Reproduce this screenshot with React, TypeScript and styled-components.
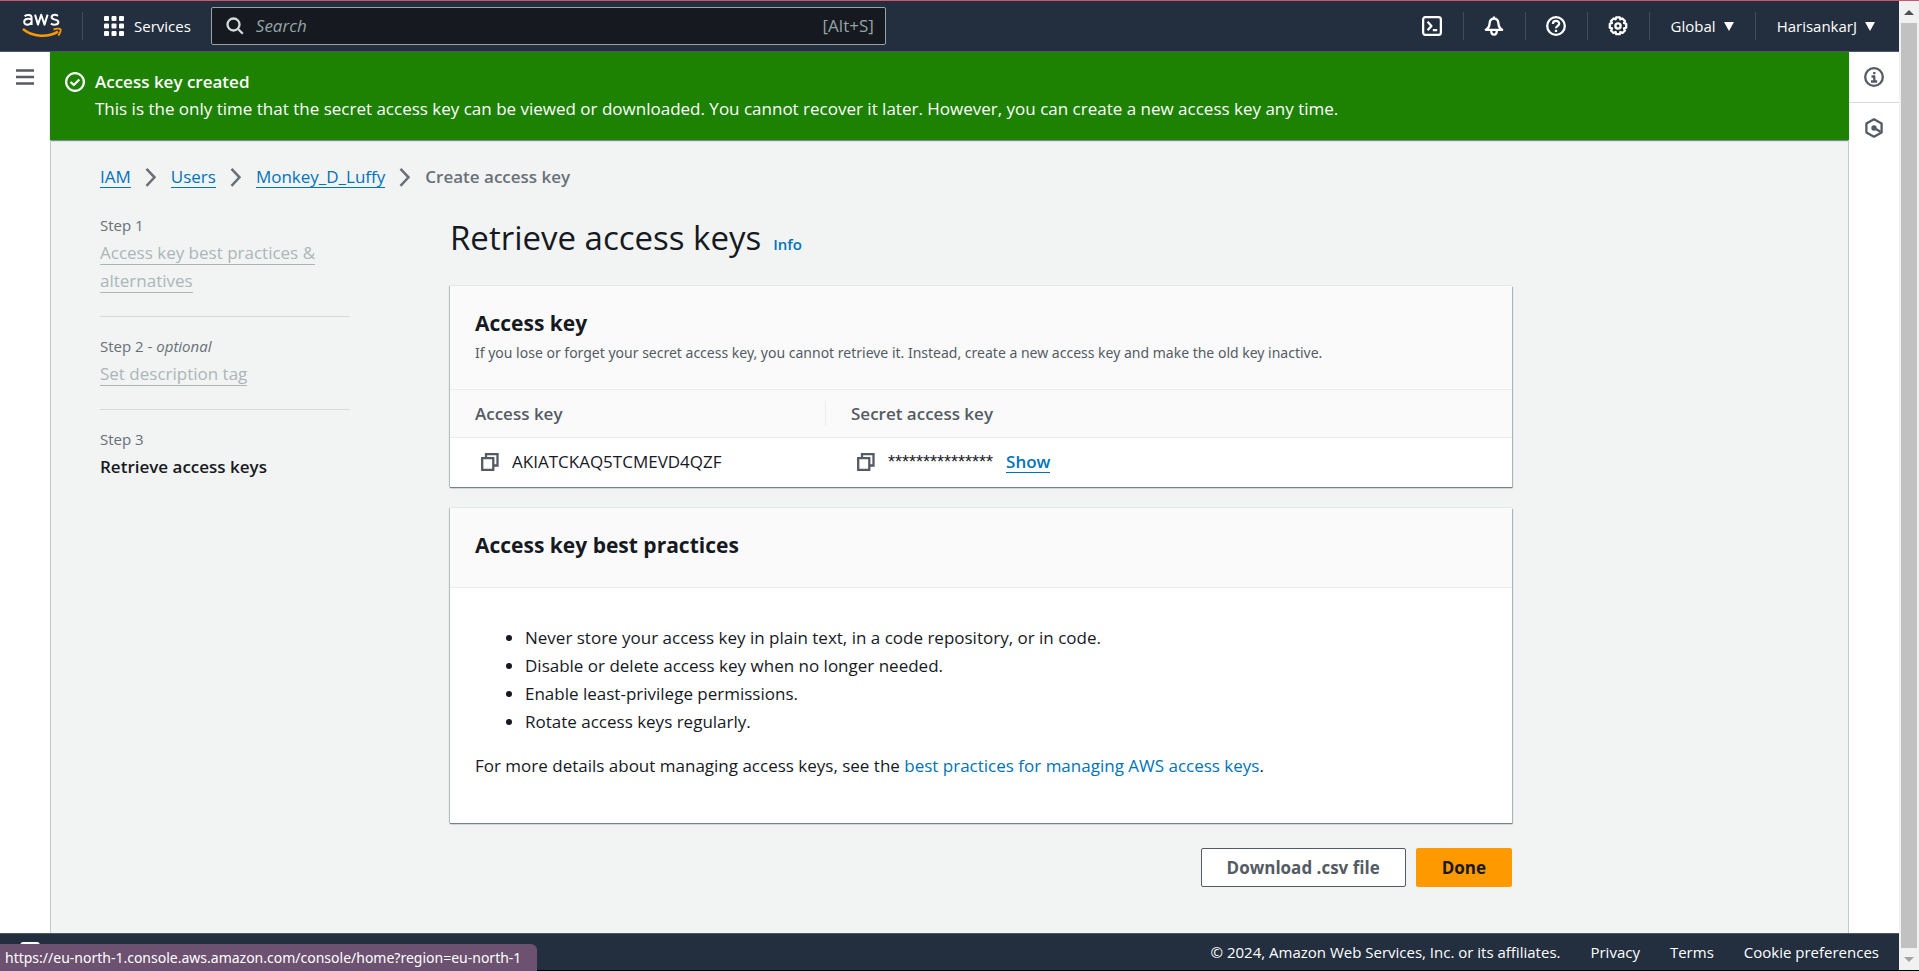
import React from 'react';
import styled, { createGlobalStyle } from 'styled-components';

const GlobalStyle = createGlobalStyle`
  *, *::before, *::after { box-sizing: border-box; }
  body {
    margin: 0;
    background: #f2f3f3;
    color: #16191f;
    font-family: 'Open Sans', 'Noto Sans', sans-serif;
    font-size: 17px;
    line-height: 28px;
  }
  h1, h2, p, ul, ol { margin: 0; padding: 0; }
  button, input { font: inherit; }
  button { cursor: pointer; }
  svg { display: block; flex: none; }
`;

/* Window frame */

const Frame = styled.div`
  display: grid;
  grid-template-columns: minmax(0, 1fr) 20px;
  min-height: 100vh;
  border-top: 1px solid #c8586e;
  border-bottom: 1px solid #000;
`;

const Page = styled.div`
  display: flex;
  flex-direction: column;
`;

const ScrollTrack = styled.div`
  display: flex;
  flex-direction: column;
  align-items: center;
  background: #f1f1f1;
`;

const ScrollArrow = styled.div<{ $muted?: boolean }>`
  display: flex;
  align-items: center;
  justify-content: center;
  height: 22px;
  color: ${(p) => (p.$muted ? '#a3a3a3' : '#505050')};
`;

const ScrollThumb = styled.div`
  flex: 1;
  width: 16px;
  background: #c1c1c1;
`;

/* Top navigation */

const TopBar = styled.header`
  display: flex;
  align-items: center;
  justify-content: space-between;
  height: 51px;
  padding: 0 3px 0 22px;
  background: #232f3e;
  border-bottom: 1px solid #4b5666;
  color: #fff;
  font-size: 15px;
`;

const BarGroup = styled.div`
  display: flex;
  align-items: center;
`;

const LogoLink = styled.a`
  display: block;
  padding-right: 20px;
  color: #fff;
`;

const Divider = styled.span`
  width: 1px;
  height: 28px;
  background: #414d5c;
`;

const BarButton = styled.button`
  display: flex;
  align-items: center;
  gap: 8px;
  padding: 0 21px;
  border: 0;
  background: none;
  color: #fff;
  font-weight: 500;
`;

const ToolButton = styled(BarButton)`
  justify-content: center;
  width: 61px;
  padding: 0;
`;

const ServicesButton = styled(BarButton)`
  gap: 10px;
  padding-right: 20px;
`;

const SearchBox = styled.label`
  display: flex;
  align-items: center;
  gap: 12px;
  width: 675px;
  height: 38px;
  padding: 0 11px 0 14px;
  background: #16191f;
  border: 1px solid #95a5a6;
  border-radius: 2px;
  color: #95a5a6;
  font-size: 17px;
`;

const SearchInput = styled.input`
  flex: 1;
  min-width: 0;
  padding: 0;
  border: 0;
  outline: 0;
  background: none;
  color: #fff;
  &::placeholder { color: #95a5a6; font-style: italic; opacity: 1; }
`;

/* Body */

const Body = styled.div`
  display: grid;
  grid-template-columns: 50px minmax(0, 1fr) 50px;
  flex: 1;
`;

const Rail = styled.aside`
  display: flex;
  flex-direction: column;
  background: #fff;
`;

const RailButton = styled.button<{ $ruled?: boolean }>`
  display: flex;
  align-items: center;
  justify-content: center;
  height: 51px;
  padding: 0;
  border: 0;
  border-bottom: 1px solid ${(p) => (p.$ruled ? '#d5dbdb' : 'transparent')};
  background: none;
  color: #545b64;
`;

const Content = styled.div`
  display: flex;
  flex-direction: column;
`;

const Flash = styled.div`
  display: flex;
  gap: 10px;
  padding: 16px 15px 18px;
  background: #1d8102;
  color: #fff;
  line-height: 27px;
  box-shadow: 0 1px 1px #7b8b8e;
  svg { margin-top: 4px; }
`;

const FlashTitle = styled.p`
  font-weight: 600;
`;

const Main = styled.main`
  flex: 1;
  padding: 23px 49px 45px;
  border: solid #c3cacc;
  border-width: 0 1px;
`;

const Breadcrumbs = styled.ol`
  display: flex;
  align-items: center;
  list-style: none;
  height: 28px;
`;

const Crumb = styled.li`
  display: flex;
  align-items: center;
  color: #687078;
  font-weight: 600;
  svg { margin: 0 14px; }
`;

const Link = styled.a<{ $underlined?: boolean }>`
  color: #0073bb;
  font-weight: 400;
  text-decoration: none;
  line-height: 21px;
  border-bottom: ${(p) => (p.$underlined ? '1px solid currentColor' : '0')};
`;

const Wizard = styled.div`
  display: grid;
  grid-template-columns: 250px minmax(0, 1062px);
  column-gap: 100px;
  margin-top: 20px;
`;

const Steps = styled.ol`
  list-style: none;
`;

const Step = styled.li`
  & + & {
    margin-top: 21px;
    padding-top: 15px;
    border-top: 1px solid #d5dbdb;
  }
`;

const StepLabel = styled.div`
  color: #687078;
  font-size: 15px;
`;

const StepLink = styled.a`
  color: #aab7b8;
  text-decoration: none;
  border-bottom: 1px solid currentColor;
`;

const StepCurrent = styled.div`
  font-weight: 600;
`;

const TitleRow = styled.div`
  display: flex;
  align-items: baseline;
  gap: 12px;
  height: 75px;
`;

const Title = styled.h1`
  font-size: 33px;
  font-weight: 400;
  line-height: 53px;
`;

const InfoLink = styled.a`
  color: #0073bb;
  font-size: 15px;
  font-weight: 600;
  text-decoration: none;
`;

const Card = styled.section`
  background: #fff;
  box-shadow: 0 1px 1px #6f8285, 1px 1px 1px #b5bfc1, -1px 0 1px #c4cccd, 0 -1px 0 #eaeded;
  & + & { margin-top: 21px; }
`;

const CardHead = styled.div<{ $compact?: boolean }>`
  padding: ${(p) => (p.$compact ? '23px 25px 28px' : '23px 25px 20px')};
  background: #fafafa;
  border-bottom: 1px solid #eaeded;
`;

const CardTitle = styled.h2`
  font-size: 21px;
  font-weight: 700;
  line-height: 28px;
`;

const CardText = styled.p`
  padding: 2px 0;
  color: #545b64;
  font-family: 'Noto Sans', 'Open Sans', sans-serif;
  font-size: 14px;
`;

const KeyTable = styled.table`
  width: 100%;
  table-layout: fixed;
  border-collapse: collapse;
  th {
    height: 47px;
    padding: 0;
    background: #fafafa;
    border-bottom: 1px solid #eaeded;
    color: #545b64;
    font-weight: 600;
    text-align: left;
  }
  td { height: 50px; padding: 0 31px; }
  th:first-child, td:first-child { width: 376px; }
`;

const HeadCell = styled.div<{ $separated?: boolean }>`
  padding: 0 25px;
  line-height: 25px;
  border-right: 1px solid ${(p) => (p.$separated ? '#eaeded' : 'transparent')};
`;

const KeyCell = styled.div`
  display: flex;
  align-items: center;
  gap: 13px;
`;

const MaskedSecret = styled.span`
  font-family: 'Liberation Sans', sans-serif;
  font-size: 18px;
`;

const IconButton = styled.button`
  padding: 0;
  border: 0;
  background: none;
  color: #545b64;
`;

const ShowButton = styled.button`
  padding: 0;
  border: 0;
  border-bottom: 1px solid currentColor;
  background: none;
  color: #0073bb;
  font-weight: 600;
  line-height: 21px;
`;

const CardBody = styled.div`
  padding: 36px 25px 43px;
`;

const Practices = styled.ul`
  padding-left: 50px;
  margin-bottom: 16px;
`;

const Actions = styled.div`
  display: flex;
  justify-content: flex-end;
  gap: 10px;
  margin-top: 25px;
`;

const ActionButton = styled.button<{ $primary?: boolean }>`
  height: 39px;
  padding: 0 25px;
  border: 1px solid ${(p) => (p.$primary ? '#ff9900' : '#545b64')};
  border-radius: 2px;
  background: ${(p) => (p.$primary ? '#ff9900' : '#fff')};
  color: ${(p) => (p.$primary ? '#16191f' : '#545b64')};
  font-weight: 700;
  line-height: 24px;
`;

/* Footer */

const Footer = styled.footer`
  position: relative;
  display: flex;
  align-items: center;
  justify-content: space-between;
  height: 37px;
  padding: 0 20px;
  background: #232f3e;
  border-top: 1px solid #4b5666;
  color: #fff;
  font-size: 15px;
`;

const FooterLinks = styled.nav`
  display: flex;
  gap: 30px;
  margin-left: auto;
`;

const FooterLink = styled.a`
  color: #fff;
  text-decoration: none;
`;

const ShellButton = styled(IconButton)`
  color: #fff;
`;

const StatusBubble = styled.div`
  position: absolute;
  left: 0;
  bottom: -1px;
  padding: 0 16px 0 5px;
  background: #6c5171;
  border-radius: 0 6px 0 0;
  color: #fff;
  font-family: 'Noto Sans', 'Open Sans', sans-serif;
  font-size: 14px;
  line-height: 27px;
`;

/* Icons */

const AwsLogo = () => (
  <svg width="40" height="26" viewBox="0 0 40 26" aria-label="AWS">
    <g fill="none" stroke="#fff" strokeWidth="2" strokeLinejoin="round">
      <path d="M2.6 3.2C4.6 1.6 9.6 1 9.6 4.8V12M9.6 6.2C6 5 2.2 5.8 2.2 9C2.2 12.6 8 12.6 9.6 8.8" />
      <path d="M13 1.6L16 11.6L19.2 1.8L22.5 11.6L25.6 1.6" />
      <path d="M36 2.8C33.6 1.4 29.6 1.4 29.6 4.2C29.6 7.4 36.4 5.8 36.4 9C36.4 12.2 31.6 12.2 28.8 10.6" />
    </g>
    <path d="M1 16C11 24.5 26 24.5 36 18.6" fill="none" stroke="#ff9900" strokeWidth="2.4" />
    <path d="M31.5 16.6C34 15.3 38 15.4 38.6 16.2C39 17.4 38 20.6 36.2 22.4" fill="none" stroke="#ff9900" strokeWidth="1.8" />
  </svg>
);

const GridIcon = () => (
  <svg width="20" height="20" viewBox="0 0 20 20" fill="currentColor" aria-hidden="true">
    {[0, 7.5, 15].map((y) => [0, 7.5, 15].map((x) => <rect key={`${x}-${y}`} x={x} y={y} width="5" height="5" rx="1" />))}
  </svg>
);

const SearchIcon = () => (
  <svg width="18" height="18" viewBox="0 0 18 18" fill="none" stroke="#d5dbdb" strokeWidth="2.3" aria-hidden="true">
    <circle cx="7.5" cy="7.5" r="6" />
    <path d="M11.8 11.8L16.8 16.8" />
  </svg>
);

const iconProps = {
  width: 20,
  height: 20,
  viewBox: '0 0 20 20',
  fill: 'none',
  stroke: 'currentColor',
  strokeWidth: 2.3,
  strokeLinejoin: 'round' as const,
  'aria-hidden': true,
};

const ShellIcon = () => (
  <svg {...iconProps}>
    <rect x="1.1" y="1.1" width="17.8" height="17.8" rx="2.5" />
    <path d="M5.6 5.8L9.4 10L5.6 14.2M10.8 14.2H15.2" />
  </svg>
);

const BellIcon = () => (
  <svg {...iconProps}>
    <path d="M10 0.4V2.4M1.8 13.8C4.6 12.4 5.4 10.4 5.6 7.4C5.8 4.2 7.4 2.6 10 2.6S14.2 4.2 14.4 7.4C14.6 10.4 15.4 12.4 18.2 13.8Z" />
    <path d="M7.2 14.5C7.2 20 12.8 20 12.8 14.5" />
  </svg>
);

const HelpIcon = () => (
  <svg {...iconProps}>
    <circle cx="10" cy="10" r="8.8" />
    <path d="M6.9 8C6.9 4 13.2 4 13.2 7.7C13.2 9.8 10 9.9 10 12.3M10 13.8V16" />
  </svg>
);

const GearIcon = () => (
  <svg {...iconProps}>
    <path d="M8.2 1.3h3.6l.6 2 2-.8 2.6 2.5-1 2 2.2.8v3.9l-2.2.7 1 2.1-2.5 2.5-2.1-1-.6 2.1H8.2l-.6-2.1-2.1 1L3 14.5l1-2.1-2.2-.7V7.8L4 7 3 5l2.6-2.5 2 .8z" />
    <circle cx="10" cy="10" r="2.6" />
  </svg>
);

const CaretIcon = () => (
  <svg width="10" height="9" viewBox="0 0 10 9" fill="currentColor" aria-hidden="true">
    <path d="M0 0H10L5 9Z" />
  </svg>
);

const MenuIcon = () => (
  <svg width="18" height="16" viewBox="0 0 18 16" stroke="currentColor" strokeWidth="2.4" aria-hidden="true">
    <path d="M0 1.5H18M0 8H18M0 14.5H18" />
  </svg>
);

const InfoIcon = () => (
  <svg {...iconProps}>
    <circle cx="10" cy="10" r="8.8" />
    <path d="M10.3 5V7.2M7.5 9.5H10.3V14.5M7 14.5H13.2" />
  </svg>
);

const HexIcon = () => (
  <svg {...iconProps}>
    <path d="M10 1.3L17.6 5.6V14.4L10 18.7L2.4 14.4V5.6Z" />
    <circle cx="10" cy="10" r="1.8" fill="currentColor" strokeWidth="1.8" />
    <path d="M10 10L16.5 13.8" />
  </svg>
);

const CheckIcon = () => (
  <svg {...iconProps}>
    <circle cx="10" cy="10" r="8.9" />
    <path d="M5.6 10L8.8 13L14.3 7.5" />
  </svg>
);

const ChevronIcon = () => (
  <svg width="12" height="20" viewBox="0 0 12 20" fill="none" stroke="#687078" strokeWidth="2.5" aria-hidden="true">
    <path d="M1.5 1.8L9.5 10.3L1.5 18.8" />
  </svg>
);

const CopyIcon = () => (
  <svg width="18" height="18" viewBox="0 0 18 18" fill="none" stroke="currentColor" strokeWidth="2.3" aria-hidden="true">
    <path d="M1.2 5.2H12.3V16.8H1.2Z" />
    <path d="M5 5V1.2H16.5V12.5H12.5" />
  </svg>
);

const trail = ['IAM', 'Users', 'Monkey_D_Luffy'];

const tools = [
  { label: 'CloudShell', Icon: ShellIcon },
  { label: 'Notifications', Icon: BellIcon },
  { label: 'Help', Icon: HelpIcon },
  { label: 'Settings', Icon: GearIcon },
];

const practices = [
  'Never store your access key in plain text, in a code repository, or in code.',
  'Disable or delete access key when no longer needed.',
  'Enable least-privilege permissions.',
  'Rotate access keys regularly.',
];

export default function App() {
  return (
    <Frame>
      <GlobalStyle />
      <Page>
        <TopBar>
          <BarGroup>
            <LogoLink href="#home"><AwsLogo /></LogoLink>
            <Divider />
            <ServicesButton type="button"><GridIcon />Services</ServicesButton>
            <SearchBox>
              <SearchIcon />
              <SearchInput type="text" placeholder="Search" aria-label="Search" />
              <span>[Alt+S]</span>
            </SearchBox>
          </BarGroup>
          <BarGroup>
            {tools.map(({ label, Icon }) => (
              <React.Fragment key={label}>
                <ToolButton type="button" aria-label={label}><Icon /></ToolButton>
                <Divider />
              </React.Fragment>
            ))}
            <BarButton type="button">Global<CaretIcon /></BarButton>
            <Divider />
            <BarButton type="button">HarisankarJ<CaretIcon /></BarButton>
          </BarGroup>
        </TopBar>

        <Body>
          <Rail>
            <RailButton type="button" aria-label="Open navigation"><MenuIcon /></RailButton>
          </Rail>
          <Content>
            <Flash role="status">
              <CheckIcon />
              <div>
                <FlashTitle>Access key created</FlashTitle>
                <p>This is the only time that the secret access key can be viewed or downloaded. You cannot recover it later. However, you can create a new access key any time.</p>
              </div>
            </Flash>
            <Main>
              <Breadcrumbs>
                {trail.map((name) => (
                  <Crumb key={name}><Link href={`#${name}`} $underlined>{name}</Link><ChevronIcon /></Crumb>
                ))}
                <Crumb>Create access key</Crumb>
              </Breadcrumbs>
              <Wizard>
                <Steps>
                  <Step>
                    <StepLabel>Step 1</StepLabel>
                    <StepLink href="#step-1">Access key best practices &amp; alternatives</StepLink>
                  </Step>
                  <Step>
                    <StepLabel>Step 2 - <em>optional</em></StepLabel>
                    <StepLink href="#step-2">Set description tag</StepLink>
                  </Step>
                  <Step>
                    <StepLabel>Step 3</StepLabel>
                    <StepCurrent>Retrieve access keys</StepCurrent>
                  </Step>
                </Steps>
                <div>
                  <TitleRow>
                    <Title>Retrieve access keys</Title>
                    <InfoLink href="#info">Info</InfoLink>
                  </TitleRow>
                  <Card>
                    <CardHead>
                      <CardTitle>Access key</CardTitle>
                      <CardText>If you lose or forget your secret access key, you cannot retrieve it. Instead, create a new access key and make the old key inactive.</CardText>
                    </CardHead>
                    <KeyTable>
                      <thead>
                        <tr>
                          <th scope="col"><HeadCell $separated>Access key</HeadCell></th>
                          <th scope="col"><HeadCell>Secret access key</HeadCell></th>
                        </tr>
                      </thead>
                      <tbody>
                        <tr>
                          <td>
                            <KeyCell>
                              <IconButton type="button" aria-label="Copy access key"><CopyIcon /></IconButton>
                              <span>AKIATCKAQ5TCMEVD4QZF</span>
                            </KeyCell>
                          </td>
                          <td>
                            <KeyCell>
                              <IconButton type="button" aria-label="Copy secret access key"><CopyIcon /></IconButton>
                              <MaskedSecret>***************</MaskedSecret>
                              <ShowButton type="button">Show</ShowButton>
                            </KeyCell>
                          </td>
                        </tr>
                      </tbody>
                    </KeyTable>
                  </Card>
                  <Card>
                    <CardHead $compact>
                      <CardTitle>Access key best practices</CardTitle>
                    </CardHead>
                    <CardBody>
                      <Practices>
                        {practices.map((text) => <li key={text}>{text}</li>)}
                      </Practices>
                      <p>For more details about managing access keys, see the <Link href="#best-practices">best practices for managing AWS access keys</Link>.</p>
                    </CardBody>
                  </Card>
                  <Actions>
                    <ActionButton type="button">Download .csv file</ActionButton>
                    <ActionButton type="button" $primary>Done</ActionButton>
                  </Actions>
                </div>
              </Wizard>
            </Main>
          </Content>
          <Rail>
            <RailButton type="button" aria-label="Info panel" $ruled><InfoIcon /></RailButton>
            <RailButton type="button" aria-label="Tools panel"><HexIcon /></RailButton>
          </Rail>
        </Body>

        <Footer>
          <ShellButton type="button" aria-label="CloudShell"><ShellIcon /></ShellButton>
          <FooterLinks>
            <span>© 2024, Amazon Web Services, Inc. or its affiliates.</span>
            <FooterLink href="#privacy">Privacy</FooterLink>
            <FooterLink href="#terms">Terms</FooterLink>
            <FooterLink href="#cookies">Cookie preferences</FooterLink>
          </FooterLinks>
          <StatusBubble>https://eu-north-1.console.aws.amazon.com/console/home?region=eu-north-1</StatusBubble>
        </Footer>
      </Page>
      <ScrollTrack aria-hidden="true">
        <ScrollArrow>
          <svg width="10" height="5" viewBox="0 0 10 5" fill="currentColor"><path d="M0 5H10L5 0Z" /></svg>
        </ScrollArrow>
        <ScrollThumb />
        <ScrollArrow $muted>
          <svg width="10" height="5" viewBox="0 0 10 5" fill="currentColor"><path d="M0 0H10L5 5Z" /></svg>
        </ScrollArrow>
      </ScrollTrack>
    </Frame>
  );
}
